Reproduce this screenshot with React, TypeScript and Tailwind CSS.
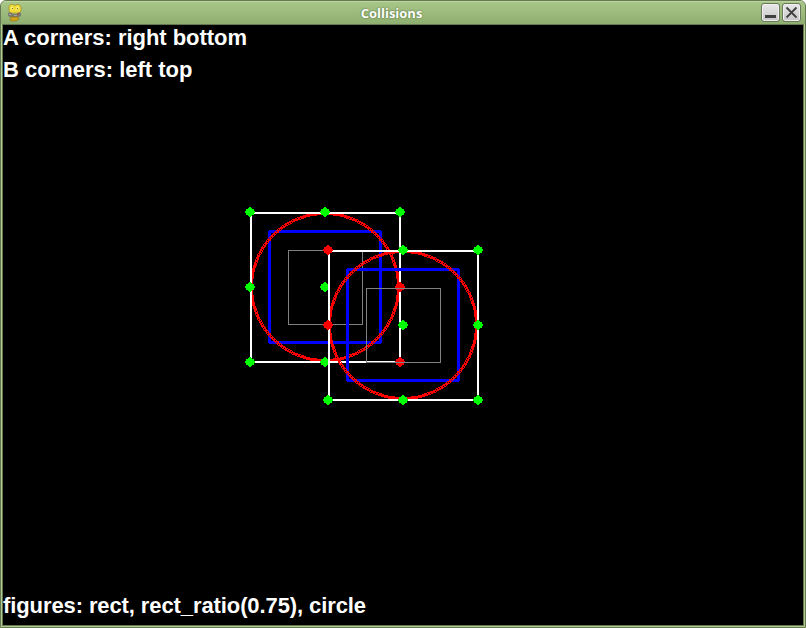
import React from "react";

type Pt = [number, number];

// Midpoint-style ring outline, one pixel per step
function ring(cx: number, cy: number, r: number): string {
  let ix = 0;
  let iy = r * 64;
  let h = 0;
  let i = 0;
  let oi = 0xffff;
  let oh = 0xffff;
  let d = "";
  const put = (x: number, y: number) => {
    d += `M${x} ${y}h1v1h-1z`;
  };
  do {
    h = (ix + 32) >> 6;
    i = (iy + 32) >> 6;
    if (oi !== i || oh !== h) {
      for (const [a, b] of [[h, i], [i, h]] as Pt[]) {
        const xs = a > 0 ? [cx - a, cx + a - 1] : [cx];
        const ys = b > 0 ? [cy - b, cy + b - 1] : [cy];
        xs.forEach((x) => ys.forEach((y) => put(x, y)));
      }
      oi = i;
      oh = h;
    }
    ix = ix + Math.trunc(iy / r);
    iy = iy - Math.trunc(ix / r);
  } while (i > h);
  return d;
}

const HALF_WIDTHS = [5, 4, 4, 2, 1];

function Dot({ x, y, hit }: { x: number; y: number; hit: boolean }) {
  const d = HALF_WIDTHS.map(
    (w, n) => `M${x - w} ${y - n - 1}h${w * 2}v1h${-w * 2}zM${x - w} ${y + n}h${w * 2}v1h${-w * 2}z`,
  ).join("");
  return <path d={d} fill={hit ? "#ff0000" : "#00ff00"} />;
}

function Figure({ x, y, hits }: { x: number; y: number; hits: string[] }) {
  const cx = x + 75;
  const cy = y + 75;
  const steps = [0, 75, 150];
  return (
    <g>
      <path
        d={`M${x + 19} ${y + 18}h112v1h1v112h-1v1h-112v-1h-1v-112h1zM${x + 21} ${y + 21}v108h108v-108z`}
        fill="#0000ff"
        fillRule="evenodd"
      />
      {[75, 74, 73].map((r) => (
        <path key={r} d={ring(cx, cy, r)} fill="#ff0000" />
      ))}
      <rect x={x + 1} y={y + 1} width="149" height="149" fill="none" stroke="#ffffff" strokeWidth="2" />
      <rect x={x + 38.5} y={y + 38.5} width="74" height="74" fill="none" stroke="#808080" />
      {steps.map((dy) =>
        steps.map((dx) => (
          <Dot key={`${dx}-${dy}`} x={x + dx} y={y + dy} hit={hits.includes(`${dx}-${dy}`)} />
        )),
      )}
    </g>
  );
}

function Mascot() {
  return (
    <svg width="16" height="18" viewBox="0 0 16 18" className="block">
      <path d="M2 2L4 .5H6L8 1.5L10 .5H12L14 3V7L12 9H4L2 7Z" fill="#efdc3a" stroke="#a08a1c" strokeWidth=".7" />
      <circle cx="5" cy="4" r="1.5" fill="#f5ec80" />
      <circle cx="10.5" cy="4" r="1.5" fill="#f5ec80" />
      <path d="M5 4h1v1H5zM10 4h1v1h-1z" fill="#7c6c1e" />
      <path d="M1 9L3 8L6 10H10L12 8L14 9V12L12 13H3L1 12Z" fill="#7d7b70" />
      <path d="M2 10h2v1H2zM7 11h3v1H7z" fill="#a5a498" />
      <path d="M10 9h2v2h-2z" fill="#9c5a50" />
      <path d="M4 13H11L12 15L9 17H4L3 15Z" fill="#cfa21c" stroke="#8d6b13" strokeWidth=".6" />
    </svg>
  );
}

function WindowButton({ children }: { children: React.ReactNode }) {
  return (
    <button className="h-[19px] w-[19px] rounded-[3px] border border-[#6a785c] bg-linear-to-b from-[#e8e8e8] to-[#c6c6c6] shadow-[inset_0_0_0_1px_#efefef]">
      <svg width="17" height="17" viewBox="0 0 17 17" className="block">
        {children}
      </svg>
    </button>
  );
}

export default function App() {
  return (
    <div className="h-[628px] w-[806px] bg-white">
      <div className="flex h-full w-full flex-col overflow-hidden rounded-t-[6px] border border-[#65784f] bg-[#b1cc92]">
        <header className="flex h-[23px] shrink-0 items-start border-t border-[#bdd5a2] bg-linear-to-b from-[#a8c688] to-[#8faf70] pt-px pr-[4px] pl-[6px]">
          <div className="w-[60px] pt-px">
            <Mascot />
          </div>
          <h1 className="flex-1 pr-[45px] text-center font-['Open_Sans','Noto_Sans',sans-serif] text-[13px] leading-[20px] font-bold text-white [text-shadow:0_0_2px_#5c7a40,0_0_1px_#5c7a40]">
            Collisions
          </h1>
          <div className="flex gap-[2px]">
            <WindowButton>
              <path d="M3 11h11v3H3z" fill="#3f3f3f" />
            </WindowButton>
            <WindowButton>
              <path d="M3.5 3.5l10 10M13.5 3.5l-10 10" stroke="#3f3f3f" strokeWidth="1.8" />
            </WindowButton>
          </div>
        </header>
        <main className="mx-px mb-px grid min-h-0 flex-1 border border-[#65784f] bg-black font-['Liberation_Sans',Arial,sans-serif] text-[22px] leading-[32px] font-bold text-white">
          <svg
            width="800"
            height="600"
            viewBox="3 25 800 600"
            shapeRendering="crispEdges"
            className="col-start-1 row-start-1 block"
          >
            <Figure x={250} y={212} hits={["150-75", "150-150"]} />
            <Figure x={328} y={250} hits={["0-0", "0-75"]} />
          </svg>
          <div className="col-start-1 row-start-1 -mt-[3px] flex flex-col justify-between pb-[3px]">
            <div>
              <p className="tracking-[-0.04px]">A corners: right bottom</p>
              <p>B corners: left top</p>
            </div>
            <p className="tracking-[-0.1px]">figures: rect, rect_ratio(0.75), circle</p>
          </div>
        </main>
      </div>
    </div>
  );
}
